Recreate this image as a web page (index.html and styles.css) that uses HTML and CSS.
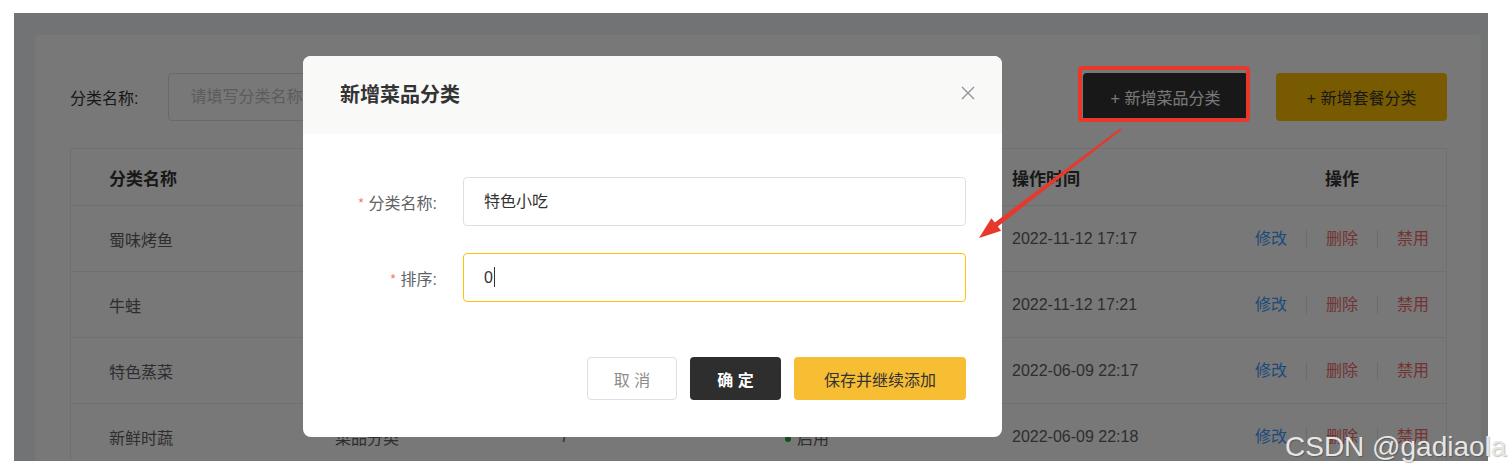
FILE: index.html
```html
<!DOCTYPE html>
<html lang="zh-CN">
<head>
  <meta charset="UTF-8">
  <title>分类管理</title>
  <link rel="stylesheet" href="styles.css">
</head>
<body>
  <div class="screen">
    <div class="card">
      <div class="toolbar">
        <span class="search-label">分类名称:</span>
        <div class="search-input">请填写分类名称</div>
        <div class="toolbar-actions">
          <button class="btn btn-dark">+ 新增菜品分类</button>
          <button class="btn btn-yellow">+ 新增套餐分类</button>
        </div>
      </div>

      <div class="table">
        <div class="tr th">
          <div>分类名称</div>
          <div>分类类型</div>
          <div>排序</div>
          <div>状态</div>
          <div>操作时间</div>
          <div class="ops">操作</div>
        </div>
        <div class="tr">
          <div>蜀味烤鱼</div>
          <div>菜品分类</div>
          <div>4</div>
          <div><i class="dot"></i>启用</div>
          <div>2022-11-12 17:17</div>
          <div class="ops"><a class="edit">修改</a><a class="del">删除</a><a class="del">禁用</a></div>
        </div>
        <div class="tr">
          <div>牛蛙</div>
          <div>菜品分类</div>
          <div>5</div>
          <div><i class="dot"></i>启用</div>
          <div>2022-11-12 17:21</div>
          <div class="ops"><a class="edit">修改</a><a class="del">删除</a><a class="del">禁用</a></div>
        </div>
        <div class="tr">
          <div>特色蒸菜</div>
          <div>菜品分类</div>
          <div>6</div>
          <div><i class="dot"></i>启用</div>
          <div>2022-06-09 22:17</div>
          <div class="ops"><a class="edit">修改</a><a class="del">删除</a><a class="del">禁用</a></div>
        </div>
        <div class="tr">
          <div>新鲜时蔬</div>
          <div>菜品分类</div>
          <div>7</div>
          <div><i class="dot"></i>启用</div>
          <div>2022-06-09 22:18</div>
          <div class="ops"><a class="edit">修改</a><a class="del">删除</a><a class="del">禁用</a></div>
        </div>
      </div>
    </div>

    <div class="mask"></div>

    <div class="dialog">
      <div class="dialog-header">
        <span class="dialog-title">新增菜品分类</span>
        <svg class="dialog-close" width="14" height="14" viewBox="0 0 14 14">
          <path d="M1 1L13 13M13 1L1 13" stroke="#909399" stroke-width="1.4" fill="none"/>
        </svg>
      </div>
      <div class="dialog-body">
        <div class="form-row">
          <label class="form-label"><span class="required">*</span>分类名称:</label>
          <div class="input">特色小吃</div>
        </div>
        <div class="form-row">
          <label class="form-label"><span class="required">*</span>排序:</label>
          <div class="input focused">0<span class="caret"></span></div>
        </div>
      </div>
      <div class="dialog-footer">
        <button class="btn btn-cancel">取 消</button>
        <button class="btn btn-ok">确 定</button>
        <button class="btn btn-save">保存并继续添加</button>
      </div>
    </div>

    <!-- annotation on the screenshot -->
    <div class="mark-box"></div>
    <svg class="mark-arrow" viewBox="14 13 1474 448">
      <polygon points="1121.6,129.7 997.8,226.5 1001.2,230.8 979,238 991.4,218.2 994.8,222.5 1120.4,128.3" fill="#e8382b"/>
    </svg>
  </div>

  <div class="watermark">CSDN @gadiaola</div>
</body>
</html>
```

FILE: styles.css
```css
/* page under the dialog */
html, body {
  margin: 0;
  padding: 0;
}

body {
  position: relative;
  width: 1508px;
  height: 474px;
  overflow: hidden;
  background: #fff;
  font-family: "Liberation Sans", "Noto Sans CJK SC", sans-serif;
  font-size: 16px;
  color: #606266;
}

.screen {
  position: relative;
  margin: 13px 0 0 14px;
  width: 1474px;
  height: 448px;
  overflow: hidden;
  background: #f3f4f7;
}

.card {
  margin: 22px 0 0 21px;
  width: 1446px;
  height: 500px;
  box-sizing: border-box;
  padding: 38px 34px 0 35px;
  background: #fff;
  border-radius: 4px;
}

.toolbar {
  display: flex;
  align-items: center;
  height: 48px;
}

.search-label {
  color: #333;
  margin-right: 30px;
}

.search-input {
  width: 320px;
  height: 48px;
  box-sizing: border-box;
  padding-left: 21px;
  line-height: 46px;
  border: 1px solid #dcdfe6;
  border-radius: 4px;
  color: #c0c4cc;
}

.toolbar-actions {
  margin-left: auto;
  display: flex;
  gap: 28px;
}

.btn {
  font-family: inherit;
  font-size: 16px;
  border: none;
  border-radius: 4px;
  cursor: pointer;
}

.btn-dark {
  width: 165px;
  height: 48px;
  background: #333;
  color: #fff;
}

.btn-yellow {
  width: 171px;
  height: 48px;
  background: #ffc200;
  color: #333;
}

.table {
  margin-top: 27px;
  border: 1px solid #ebeef5;
  border-bottom: none;
}

.tr {
  display: grid;
  grid-template-columns: 226px 225px 225px 227px 263px 210px;
  align-items: center;
  height: 66px;
  box-sizing: border-box;
  border-bottom: 1px solid #ebeef5;
}

.tr > div {
  padding-left: 38px;
  white-space: nowrap;
}

.th {
  height: 57px;
  font-size: 17px;
  font-weight: bold;
  color: #333;
}

.tr > .ops {
  padding-left: 0;
  display: flex;
  justify-content: center;
  align-items: center;
}

.ops a {
  padding: 0 19px;
  line-height: 18px;
}

.ops a + a {
  border-left: 1px solid #e4e4e4;
}

.edit {
  color: #419eff;
}

.del {
  color: #f56c6c;
}

.dot {
  display: inline-block;
  width: 6px;
  height: 6px;
  margin-right: 6px;
  border-radius: 50%;
  background: #22a83e;
  vertical-align: middle;
}

/* modal */
.mask {
  position: absolute;
  inset: 0;
  background: rgba(0, 0, 0, 0.53);
}

.dialog {
  position: absolute;
  left: 289px;
  top: 43px;
  width: 699px;
  height: 381px;
  background: #fff;
  border-radius: 8px;
  overflow: hidden;
}

.dialog-header {
  height: 78px;
  display: flex;
  align-items: center;
  justify-content: space-between;
  padding: 0 27px 4px 37px;
  box-sizing: border-box;
  background: #f9f9f8;
}

.dialog-title {
  font-size: 20px;
  font-weight: bold;
  color: #333;
}

.dialog-body {
  padding: 43px 36px 0 0;
}

.form-row {
  display: flex;
  align-items: center;
  margin-bottom: 27px;
}

.form-label {
  width: 160px;
  box-sizing: border-box;
  padding-right: 26px;
  text-align: right;
  color: #606266;
}

.required {
  color: #f56c6c;
  font-size: 13px;
  margin-right: 5px;
  vertical-align: 2px;
}

.input {
  flex: 1;
  height: 49px;
  box-sizing: border-box;
  padding-left: 20px;
  line-height: 47px;
  border: 1px solid #dcdfe6;
  border-radius: 4px;
  color: #333;
}

.input.focused {
  border-color: #ffc200;
}

.caret {
  display: inline-block;
  width: 1px;
  height: 20px;
  margin-left: 1px;
  background: #333;
  vertical-align: -4px;
}

.dialog-footer {
  display: flex;
  justify-content: flex-end;
  gap: 13px;
  padding: 28px 36px 0 0;
}

.btn-cancel {
  width: 90px;
  height: 43px;
  background: #fff;
  border: 1px solid #dcdfe6;
  color: #8c8c8c;
}

.btn-ok {
  width: 91px;
  height: 43px;
  background: #2e2e2e;
  color: #fff;
  font-weight: bold;
}

.btn-save {
  width: 172px;
  height: 43px;
  background: #f7bd33;
  color: #333;
}

/* red annotation */
.mark-box {
  position: absolute;
  left: 1064px;
  top: 53px;
  width: 172px;
  height: 56px;
  box-sizing: border-box;
  border: 4px solid #e8382b;
  border-radius: 4px;
}

.mark-arrow {
  position: absolute;
  left: 0;
  top: 0;
  width: 1474px;
  height: 448px;
}

.watermark {
  position: absolute;
  left: 1285px;
  top: 433px;
  font-family: "Liberation Sans", sans-serif;
  font-size: 28px;
  line-height: 28px;
  white-space: nowrap;
  color: #e6e6e6;
  text-shadow: 1px 1px 1px rgba(0, 0, 0, 0.25);
}
```
